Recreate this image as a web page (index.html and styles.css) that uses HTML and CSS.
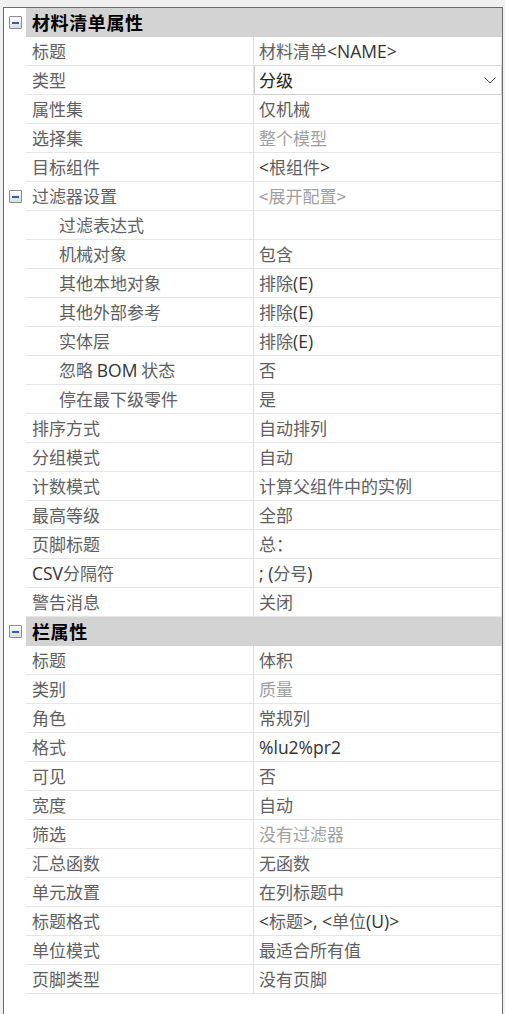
FILE: index.html
```html
<!DOCTYPE html>
<html lang="zh">
<head>
<meta charset="utf-8">
<link rel="stylesheet" href="styles.css">
</head>
<body>
<div class="panel">
  <div class="row head"><div class="gut"><span class="minus"></span></div><div class="htitle">材料清单属性</div></div>
  <div class="row"><div class="gut"></div><div class="lab">标题</div><div class="val">材料清单<span class="lat">&lt;NAME&gt;</span></div></div>
  <div class="row"><div class="gut"></div><div class="lab">类型</div><div class="val drop"><span class="dark">分级</span><svg class="chev" width="12" height="7" viewBox="0 0 12 7"><polyline points="0.5,0.5 6,6 11.5,0.5" fill="none" stroke="#444" stroke-width="1"/></svg></div></div>
  <div class="row"><div class="gut"></div><div class="lab">属性集</div><div class="val">仅机械</div></div>
  <div class="row"><div class="gut"></div><div class="lab">选择集</div><div class="val dis">整个模型</div></div>
  <div class="row"><div class="gut"></div><div class="lab">目标组件</div><div class="val"><span class="lat">&lt;</span>根组件<span class="lat">&gt;</span></div></div>
  <div class="row"><div class="gut"><span class="minus"></span></div><div class="lab">过滤器设置</div><div class="val dis">&lt;展开配置&gt;</div></div>
  <div class="row"><div class="gut"></div><div class="lab sub">过滤表达式</div><div class="val"></div></div>
  <div class="row"><div class="gut"></div><div class="lab sub">机械对象</div><div class="val">包含</div></div>
  <div class="row"><div class="gut"></div><div class="lab sub">其他本地对象</div><div class="val">排除<span class="lat">(E)</span></div></div>
  <div class="row"><div class="gut"></div><div class="lab sub">其他外部参考</div><div class="val">排除<span class="lat">(E)</span></div></div>
  <div class="row"><div class="gut"></div><div class="lab sub">实体层</div><div class="val">排除<span class="lat">(E)</span></div></div>
  <div class="row"><div class="gut"></div><div class="lab sub">忽略 <span class="lat">BOM</span> 状态</div><div class="val">否</div></div>
  <div class="row"><div class="gut"></div><div class="lab sub">停在最下级零件</div><div class="val">是</div></div>
  <div class="row"><div class="gut"></div><div class="lab">排序方式</div><div class="val">自动排列</div></div>
  <div class="row"><div class="gut"></div><div class="lab">分组模式</div><div class="val">自动</div></div>
  <div class="row"><div class="gut"></div><div class="lab">计数模式</div><div class="val">计算父组件中的实例</div></div>
  <div class="row"><div class="gut"></div><div class="lab">最高等级</div><div class="val">全部</div></div>
  <div class="row"><div class="gut"></div><div class="lab">页脚标题</div><div class="val">总：</div></div>
  <div class="row"><div class="gut"></div><div class="lab"><span class="lat">CSV</span>分隔符</div><div class="val"><span class="lat">; (</span>分号<span class="lat">)</span></div></div>
  <div class="row"><div class="gut"></div><div class="lab">警告消息</div><div class="val">关闭</div></div>
  <div class="row head"><div class="gut"><span class="minus"></span></div><div class="htitle">栏属性</div></div>
  <div class="row"><div class="gut"></div><div class="lab">标题</div><div class="val">体积</div></div>
  <div class="row"><div class="gut"></div><div class="lab">类别</div><div class="val dis">质量</div></div>
  <div class="row"><div class="gut"></div><div class="lab">角色</div><div class="val">常规列</div></div>
  <div class="row"><div class="gut"></div><div class="lab">格式</div><div class="val"><span class="lat">%lu2%pr2</span></div></div>
  <div class="row"><div class="gut"></div><div class="lab">可见</div><div class="val">否</div></div>
  <div class="row"><div class="gut"></div><div class="lab">宽度</div><div class="val">自动</div></div>
  <div class="row"><div class="gut"></div><div class="lab">筛选</div><div class="val dis">没有过滤器</div></div>
  <div class="row"><div class="gut"></div><div class="lab">汇总函数</div><div class="val">无函数</div></div>
  <div class="row"><div class="gut"></div><div class="lab">单元放置</div><div class="val">在列标题中</div></div>
  <div class="row"><div class="gut"></div><div class="lab">标题格式</div><div class="val"><span class="lat">&lt;</span>标题<span class="lat">&gt;, &lt;</span>单位<span class="lat">(U)&gt;</span></div></div>
  <div class="row"><div class="gut"></div><div class="lab">单位模式</div><div class="val">最适合所有值</div></div>
  <div class="row"><div class="gut"></div><div class="lab">页脚类型</div><div class="val">没有页脚</div></div>
</div>
</body>
</html>
```
FILE: styles.css
```css
* { box-sizing: border-box; }
html, body { margin: 0; padding: 0; }
body {
  background: #f0f0f0;
  font-family: "Noto Sans CJK SC", "Noto Sans", sans-serif;
  font-size: 17px;
  color: #606060;
  overflow: hidden;
}
.panel {
  margin: 7px 2px 0 3px;
  height: 1007px;
  background: #fff;
  border: 1px solid #6b6b6b;
  border-bottom: none;
}
.row {
  display: grid;
  grid-template-columns: 22px 228px 248px;
  height: 29px;
}
.row.head {
  grid-template-columns: 22px 476px;
}
.gut {
  display: flex;
  align-items: center;
  justify-content: center;
  background: #fff;
}
.minus {
  display: block;
  width: 13px;
  height: 13px;
  border: 1px solid #8c8c8c;
  border-radius: 1px;
  background: linear-gradient(#fbfbfb, #dcdcdc);
  position: relative;
}
.minus::after {
  content: "";
  position: absolute;
  left: 2px;
  right: 2px;
  top: 5px;
  height: 2px;
  background: #3b5b9b;
}
.htitle {
  background: #d3d3d3;
  font-weight: bold;
  font-size: 18px;
  letter-spacing: 0.6px;
  color: #000;
  line-height: 29px;
  padding-left: 6px;
}
.lab, .val {
  border-bottom: 1px solid #e6e6e6;
  line-height: 28px;
  white-space: nowrap;
  overflow: hidden;
}
.lab {
  border-right: 1px solid #e0e0e0;
  padding-left: 6px;
}
.lab.sub { padding-left: 33px; }
.val {
  padding-left: 5px;
  border-right: 1px solid #e6e6e6;
}
.val.dis { color: #a0a0a0; }
.lat {
  font-family: "Open Sans", "Noto Sans", sans-serif;
  font-size: 17.5px;
  color: #333;
}
.dark { color: #222; }
.drop {
  border: 1px solid #cfcfcf;
  border-top-color: #d8d8d8;
  margin-top: -1px;
  height: 30px;
  display: flex;
  align-items: center;
  justify-content: space-between;
  padding-right: 5px;
  padding-left: 4px;
}
.chev { display: block; }
```
